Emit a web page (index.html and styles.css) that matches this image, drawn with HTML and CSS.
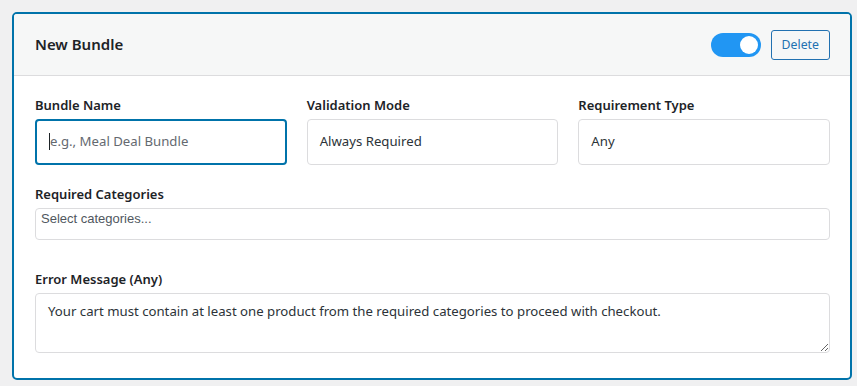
FILE: index.html
```html
<!DOCTYPE html>
<html lang="en">
<head>
    <meta charset="UTF-8">
    <meta name="viewport" content="width=device-width, initial-scale=1.0">
    <title>Bundle</title>
    <link rel="stylesheet" href="styles.css">
</head>
<body>
    <div class="bundle-card">
        <div class="bundle-header">
            <h3>New Bundle</h3>
            <div class="header-actions">
                <label class="switch">
                    <input type="checkbox" checked>
                    <span class="slider"></span>
                </label>
                <button class="delete-btn">Delete</button>
            </div>
        </div>

        <div class="bundle-body">
            <div class="row-3">
                <div class="field">
                    <label>Bundle Name</label>
                    <div class="text-input focused"><span class="caret"></span><span class="placeholder">e.g., Meal Deal Bundle</span></div>
                </div>
                <div class="field">
                    <label>Validation Mode</label>
                    <div class="text-input">Always Required</div>
                </div>
                <div class="field">
                    <label>Requirement Type</label>
                    <div class="text-input">Any</div>
                </div>
            </div>

            <div class="field">
                <label>Required Categories</label>
                <div class="multi-select">Select categories...</div>
            </div>

            <div class="field">
                <label>Error Message (Any)</label>
                <textarea class="message">Your cart must contain at least one product from the required categories to proceed with checkout.</textarea>
            </div>
        </div>
    </div>
</body>
</html>
```

FILE: styles.css
```css
body {
    margin: 12px 5px 0 12px;
    background-color: #f0f0f1;
    font-family: "Noto Sans", "Open Sans", sans-serif;
    color: #1d2327;
}

.bundle-card {
    border: 2px solid #0073aa;
    border-radius: 5px;
    background: #fff;
    overflow: hidden;
}

.bundle-header {
    height: 61px;
    display: flex;
    align-items: center;
    justify-content: space-between;
    padding: 0 20px 0 21px;
    background: #f6f7f7;
    border-bottom: 1px solid #dcdcde;
}

.bundle-header h3 {
    margin: 0 0 1px;
    font-size: 15px;
    font-weight: 600;
}

.header-actions {
    display: flex;
    align-items: center;
    gap: 10px;
}

.switch {
    position: relative;
    width: 50px;
    height: 24px;
    margin-top: 1px;
}

.switch input {
    display: none;
}

.slider {
    position: absolute;
    inset: 0;
    background: #2196f3;
    border-radius: 12px;
}

.slider::before {
    content: "";
    position: absolute;
    right: 3px;
    top: 3px;
    width: 18px;
    height: 18px;
    border-radius: 50%;
    background: #fff;
}

.delete-btn {
    height: 30px;
    padding: 0 10px;
    font-family: inherit;
    font-size: 12.3px;
    color: #2271b1;
    background: #f6f7f7;
    border: 1px solid #2271b1;
    border-radius: 3px;
}

.bundle-body {
    padding: 20px 20px 25px 21px;
}

.row-3 {
    display: grid;
    grid-template-columns: 1fr 1fr 1fr;
    gap: 20px;
    margin-bottom: 20px;
}

.field {
    margin-bottom: 20px;
}

.row-3 .field {
    margin-bottom: 0;
}

.field label {
    display: block;
    font-size: 13px;
    font-weight: 600;
    line-height: 18px;
    margin-bottom: 5px;
}

.text-input {
    height: 46px;
    box-sizing: border-box;
    display: flex;
    align-items: center;
    padding: 0 12px 2px;
    font-size: 13.2px;
    color: #2c3338;
    border: 1px solid #dcdcde;
    border-radius: 4px;
}

.text-input.focused {
    border: 2px solid #0073aa;
    padding-left: 12px;
}

.caret {
    width: 1px;
    height: 17px;
    background: #1d2327;
}

.placeholder {
    color: #646970;
}

.multi-select {
    height: 32px;
    box-sizing: border-box;
    padding: 2px 5px;
    font-family: "Liberation Sans", Arial, sans-serif;
    font-size: 13px;
    color: #50575e;
    border: 1px solid #dcdcde;
    border-radius: 4px;
    margin-bottom: 30px;
}

.message {
    display: block;
    width: 100%;
    height: 60px;
    box-sizing: border-box;
    padding: 8px 12px;
    font-family: inherit;
    font-size: 13.2px;
    color: #2c3338;
    border: 1px solid #dcdcde;
    border-radius: 4px;
    resize: vertical;
}

.bundle-body > .field:last-child {
    margin-bottom: 0;
}
```
